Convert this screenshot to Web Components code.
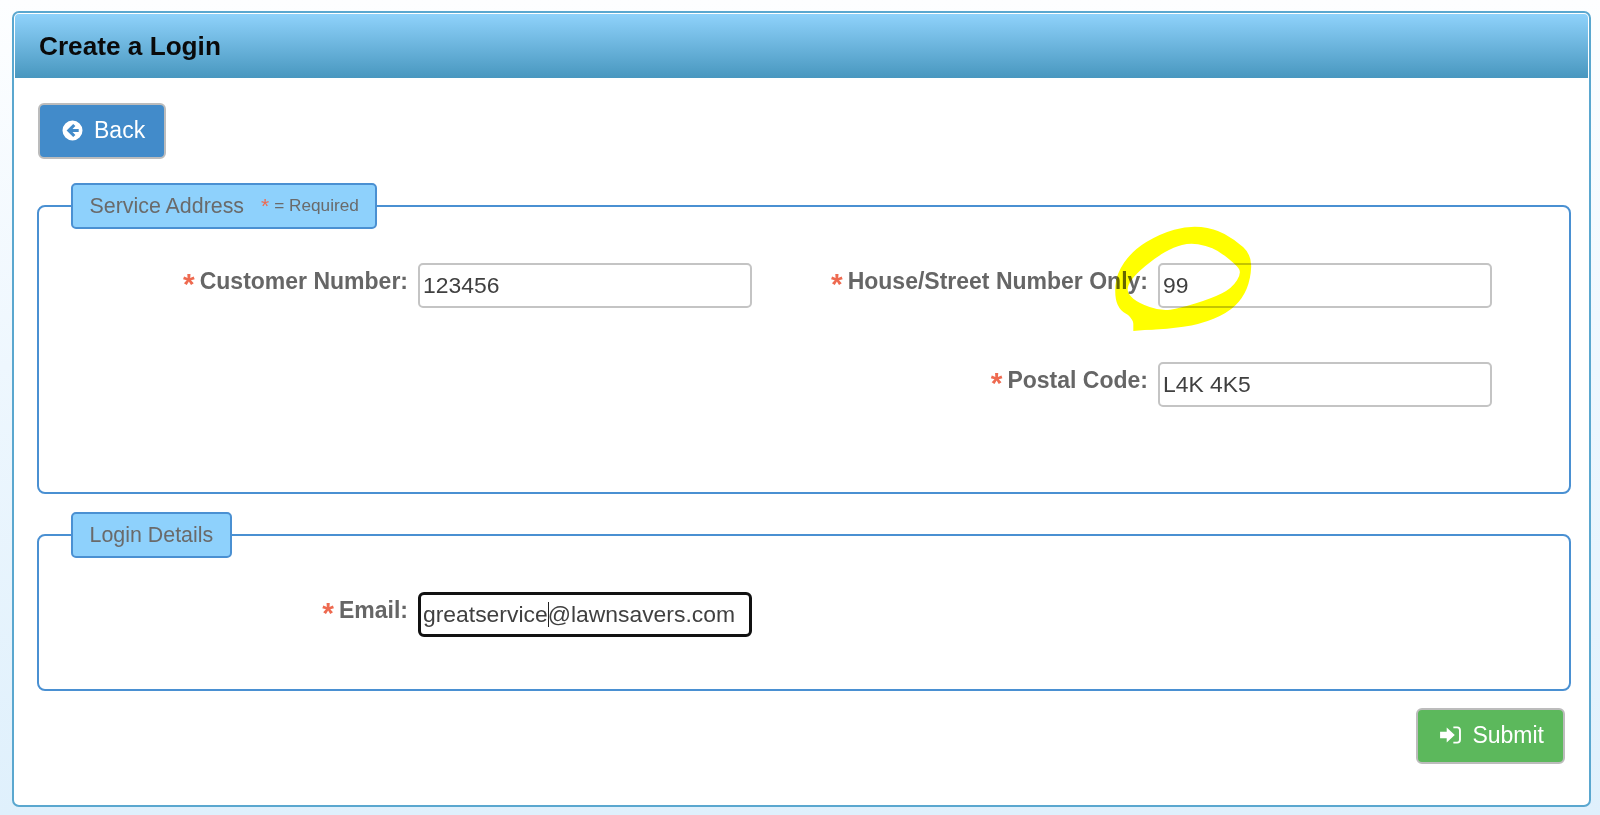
<!DOCTYPE html>
<html><head><meta charset="utf-8"><style>
html,body{margin:0;height:100%}
body{height:815px;overflow:hidden;box-sizing:border-box;padding:11px 9px 8px 12px;font-family:"Liberation Sans",Arial,sans-serif;
background:linear-gradient(180deg,#fdfeff 0%,#eef7fe 45%,#dff0fc 100%)}
</style></head><body>
<login-panel heading="Create a Login">
  <app-button kind="back" color="#428bca" style="margin-left:1px">Back</app-button>
  <form-section style="margin-top:24px">
    <span slot="legend">Service Address<req-note></req-note></span>
    <field-grid>
      <form-field label="Customer Number:" value="123456"></form-field>
      <form-field label="House/Street Number Only:" value="99" scribble></form-field>
      <span></span>
      <form-field label="Postal Code:" value="L4K 4K5"></form-field>
    </field-grid>
  </form-section>
  <form-section style="margin-top:18px" pad="52">
    <span slot="legend">Login Details</span>
    <field-grid>
      <form-field label="Email:" value="greatservice@lawnsavers.com" focused></form-field>
    </field-grid>
  </form-section>
  <form-actions>
    <app-button kind="submit" color="#5cb85c">Submit</app-button>
  </form-actions>
</login-panel>
<script>
function def(name, html, init){
  customElements.define(name, class extends HTMLElement{
    constructor(){super();this.attachShadow({mode:'open'}).innerHTML=html;}
    connectedCallback(){ if(init) init(this,this.shadowRoot); }
  });
}
function smooth(p){
  let d='';
  for(let i=0;i<p.length;i++){
    const a=p[i],b=p[(i+1)%p.length],m=[(a[0]+b[0])/2,(a[1]+b[1])/2];
    if(i===0){const z=p[p.length-1];d+='M'+(z[0]+a[0])/2+' '+(z[1]+a[1])/2;}
    d+='Q'+a[0]+' '+a[1]+' '+m[0]+' '+m[1];
  }
  return d+'Z';
}
def('login-panel',`<style>
:host{display:block;height:796px;box-sizing:border-box;border:2px solid #5aa7cf;border-radius:7px;background:#fff;padding:1px 1px 0;color:#333}
header{height:64px;display:flex;align-items:center;padding-left:24px;background:linear-gradient(#8fd2fb,#4897bf);border-radius:4px 4px 0 0;
font-size:26.2px;font-weight:700;color:#0a0a0a;box-sizing:border-box}
main{padding:25px 17px 0 22px;display:block}
</style><header id="h"></header><main><slot></slot></main>`,(e,s)=>{s.getElementById('h').textContent=e.getAttribute('heading')});

def('app-button',`<style>
:host{display:inline-flex;align-items:center;justify-content:center;height:56px;box-sizing:border-box;border:2px solid #bcbcbc;border-radius:6px;color:#fff;font-size:23px;gap:11px;padding:0 19px 2px 22px;background:var(--c)}
svg{display:block;fill:#fff}
</style><span id="i" style="display:contents"></span><span><slot></slot></span>`,(e,s)=>{
  e.style.setProperty('--c',e.getAttribute('color'));
  s.getElementById('i').innerHTML=e.getAttribute('kind')==='back'
  ?'<svg width="21" height="21" viewBox="0 0 21 21"><path fill-rule="evenodd" d="M10.5 .5a10 10 0 1 1 0 20a10 10 0 0 1 0-20zM11.2 3.9L4.6 10.5l6.6 6.6l2.2-2.2l-2.9-2.8h6.2V9h-6.2l2.9-2.9z"/></svg>'
  :'<svg width="21" height="18" viewBox="0 0 22 19"><path d="M0 6h7V1.5L15.5 9.5L7 17.5V13H0z"/><path d="M14 .5h4a4 4 0 0 1 4 4v10a4 4 0 0 1-4 4h-4v-2h4a2 2 0 0 0 2-2v-10a2 2 0 0 0-2-2h-4z"/></svg>';
});

def('form-section',`<style>
:host{display:block}
fieldset{margin:0;border:2px solid #4a90d2;border-radius:8px;padding:34px 0 var(--pb,85px);min-width:0}
legend{margin-left:32px;padding:0 16.5px;height:46px;box-sizing:border-box;background:#8ed1fc;border:2px solid #4a90d2;border-radius:5px;color:#6a6a6a;font-size:21.4px;display:flex;align-items:center}
</style><fieldset><legend><slot name="legend"></slot></legend><slot></slot></fieldset>`,(e)=>{
  if(e.getAttribute('pad')) e.style.setProperty('--pb',e.getAttribute('pad')+'px');
});

def('req-note',`<style>
:host{display:inline-block;font-size:17.2px;margin-left:17px;position:relative;top:-2px;color:#6a6a6a}
b{color:#ee6a50;font-weight:400;font-size:21px;margin-right:5px;line-height:1;vertical-align:-2px}
</style><b>*</b>= Required`);

def('field-grid',`<style>
:host{display:grid;grid-template-columns:713px 740px;row-gap:54px}
</style><slot></slot>`);

def('form-field',`<style>
:host{display:grid;grid-template-columns:1fr 334px;column-gap:10px;position:relative}
label{justify-self:end;font-size:23px;font-weight:700;color:#666;padding-top:4px;white-space:nowrap;line-height:28px}
b{color:#ee6a50;font-size:30px;line-height:20px;vertical-align:-5px;margin-right:5px}
.box{height:45px;box-sizing:border-box;border:2px solid #c4c4c4;border-radius:5px;background:#fff;color:#404040;font-size:22.9px;display:flex;align-items:center;padding:0 0 1px 3px;white-space:nowrap}
:host([focused]) .box{border:3px solid #111;border-radius:6px;padding-left:2px}
i{display:inline-block;width:1px;height:25px;background:#222;margin:0 -1px 0 0;vertical-align:-5px}
svg{position:absolute;left:348px;top:-48px;pointer-events:none;mix-blend-mode:multiply}
</style><label><b>*</b><span id="l"></span></label><div class="box"><span id="v"></span></div><span id="s" style="display:contents"></span>`,(e,s)=>{
  s.getElementById('l').textContent=e.getAttribute('label');
  const v=e.getAttribute('value'),el=s.getElementById('v');
  if(e.hasAttribute('focused')){const k=v.indexOf('@');el.innerHTML=v.slice(0,k)+'<i></i>'+v.slice(k);} else el.textContent=v;
  if(e.hasAttribute('scribble')){
    const outer=[[265,32],[342,40],[405,74],[455,120],[452,192],[428,250],[382,294],[300,328],[200,342],[110,346],[92,303],[62,288],[44,250],[48,178],[98,106],[180,56]];
    const inner=[[270,84],[222,96],[166,128],[108,176],[82,212],[84,238],[116,264],[182,288],[240,280],[336,250],[396,220],[426,172],[404,146],[356,108],[318,92]];
    s.getElementById('s').innerHTML='<svg width="160" height="120" viewBox="0 0 480 360"><path fill="#ff0" fill-rule="evenodd" d="'+smooth(outer)+smooth(inner)+'"/><path fill="#ff0" d="M100 348V300L150 312L210 338Z"/></svg>';
  }
});

def('form-actions',`<style>:host{display:flex;justify-content:flex-end;margin-top:17px;padding-right:6px}</style><slot></slot>`);
</script>
</body></html>
